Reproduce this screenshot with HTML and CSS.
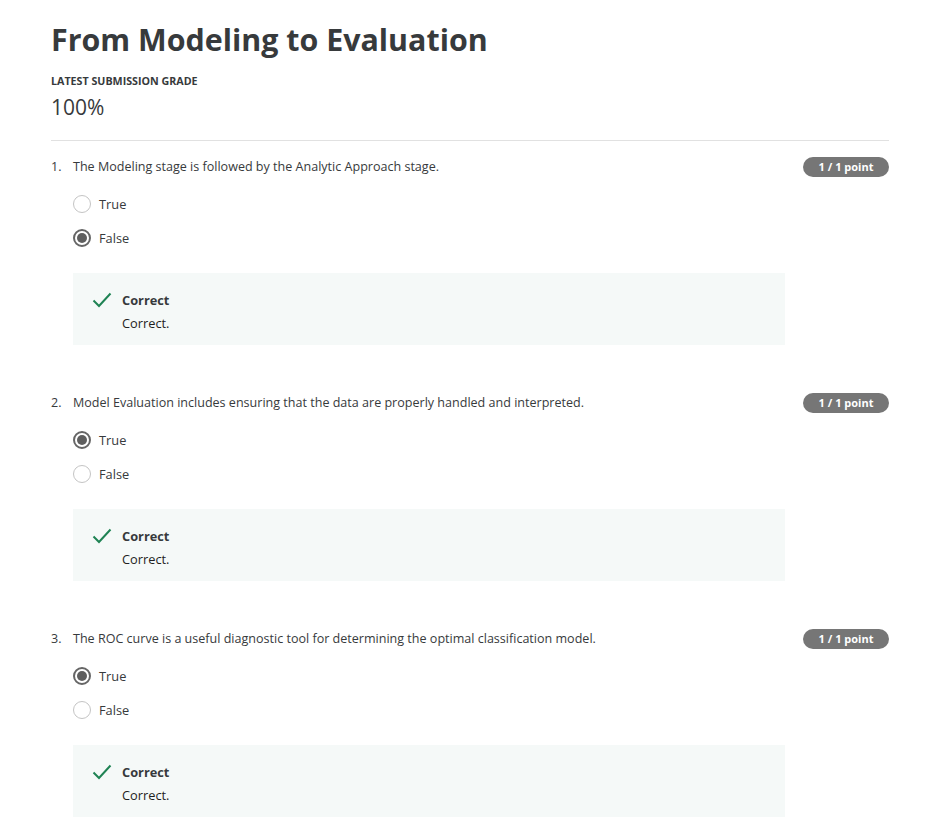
FILE: index.html
```html
<!DOCTYPE html>
<html>
<head>
<meta charset="utf-8">
<link rel="stylesheet" href="styles.css">
</head>
<body>
<div class="page">
  <h1 class="title">From Modeling to Evaluation</h1>
  <div class="grade-label">LATEST SUBMISSION GRADE</div>
  <div class="grade">100%</div>
  <hr class="divider">

  <div class="question">
    <div class="q-head">
      <span class="q-num">1.</span>
      <span class="q-text">The Modeling stage is followed by the Analytic Approach stage.</span>
      <span class="badge">1 / 1 point</span>
    </div>
    <div class="options">
      <div class="option"><span class="radio"></span><span class="opt-label">True</span></div>
      <div class="option"><span class="radio checked"></span><span class="opt-label">False</span></div>
    </div>
    <div class="feedback">
      <svg class="check" viewBox="0 0 20 16" width="20" height="16"><path d="M1.5 8.5 L7 14 L18.5 1.5" fill="none" stroke="#1f8354" stroke-width="2"/></svg>
      <div class="fb-body">
        <div class="fb-title">Correct</div>
        <div class="fb-text">Correct.</div>
      </div>
    </div>
  </div>

  <div class="question">
    <div class="q-head">
      <span class="q-num">2.</span>
      <span class="q-text">Model Evaluation includes ensuring that the data are properly handled and interpreted.</span>
      <span class="badge">1 / 1 point</span>
    </div>
    <div class="options">
      <div class="option"><span class="radio checked"></span><span class="opt-label">True</span></div>
      <div class="option"><span class="radio"></span><span class="opt-label">False</span></div>
    </div>
    <div class="feedback">
      <svg class="check" viewBox="0 0 20 16" width="20" height="16"><path d="M1.5 8.5 L7 14 L18.5 1.5" fill="none" stroke="#1f8354" stroke-width="2"/></svg>
      <div class="fb-body">
        <div class="fb-title">Correct</div>
        <div class="fb-text">Correct.</div>
      </div>
    </div>
  </div>

  <div class="question">
    <div class="q-head">
      <span class="q-num">3.</span>
      <span class="q-text">The ROC curve is a useful diagnostic tool for determining the optimal classification model.</span>
      <span class="badge">1 / 1 point</span>
    </div>
    <div class="options">
      <div class="option"><span class="radio checked"></span><span class="opt-label">True</span></div>
      <div class="option"><span class="radio"></span><span class="opt-label">False</span></div>
    </div>
    <div class="feedback">
      <svg class="check" viewBox="0 0 20 16" width="20" height="16"><path d="M1.5 8.5 L7 14 L18.5 1.5" fill="none" stroke="#1f8354" stroke-width="2"/></svg>
      <div class="fb-body">
        <div class="fb-title">Correct</div>
        <div class="fb-text">Correct.</div>
      </div>
    </div>
  </div>
</div>
</body>
</html>
```

FILE: styles.css
```css
* { box-sizing: border-box; }
html, body { margin: 0; padding: 0; background: #fff; }
body {
  font-family: "Open Sans", "Liberation Sans", sans-serif;
  color: #1f1f1f;
}
.page {
  width: 838px;
  margin-left: 51px;
  padding-top: 20px;
}
.title {
  margin: 0;
  font-size: 30.4px;
  line-height: 40px;
  font-weight: 700;
  color: #373a3c;
}
.grade-label {
  margin-top: 14px;
  font-size: 10.7px;
  font-weight: 700;
  line-height: 14px;
  color: #373a3c;
}
.grade {
  margin-top: 6px;
  font-size: 21px;
  line-height: 26px;
  color: #373a3c;
}
.divider {
  margin: 20px 0 0;
  border: 0;
  border-top: 1px solid #e1e1e1;
}
.question {
  padding-top: 16px;
  height: 236px;
}
.q-head {
  display: flex;
  align-items: center;
  font-size: 12.55px;
  line-height: 20px;
  color: #373a3c;
}
.q-num { width: 22px; }
.q-text { flex: 1; }
.badge {
  background: #767676;
  color: #fff;
  font-size: 11px;
  font-weight: 700;
  height: 20px;
  line-height: 20px;
  border-radius: 10px;
  width: 86px;
  text-align: center;
}
.options {
  margin-left: 22px;
  margin-top: 17px;
  display: flex;
  flex-direction: column;
  gap: 14px;
}
.option {
  display: flex;
  align-items: center;
  height: 20px;
  font-size: 12.8px;
  color: #373a3c;
}
.radio {
  width: 18px;
  height: 18px;
  border-radius: 50%;
  border: 1.5px solid #c4c4c4;
  margin-right: 8px;
  position: relative;
  flex: none;
}
.radio.checked {
  border: 2px solid #666;
}
.radio.checked::after {
  content: "";
  position: absolute;
  left: 2px; top: 2px;
  width: 10px; height: 10px;
  border-radius: 50%;
  background: #5f5f5f;
}
.feedback {
  margin: 25px 0 0 22px;
  width: 712px;
  height: 72px;
  background: #f5f9f8;
  display: flex;
  padding: 18px 0 0 19px;
}
.check { margin-top: 1px; margin-right: 10px; flex: none; }
.fb-title {
  font-size: 12.8px;
  font-weight: 700;
  line-height: 18px;
  color: #373a3c;
}
.fb-text {
  margin-top: 5px;
  font-size: 12.8px;
  line-height: 18px;
  color: #1f1f1f;
}
```
